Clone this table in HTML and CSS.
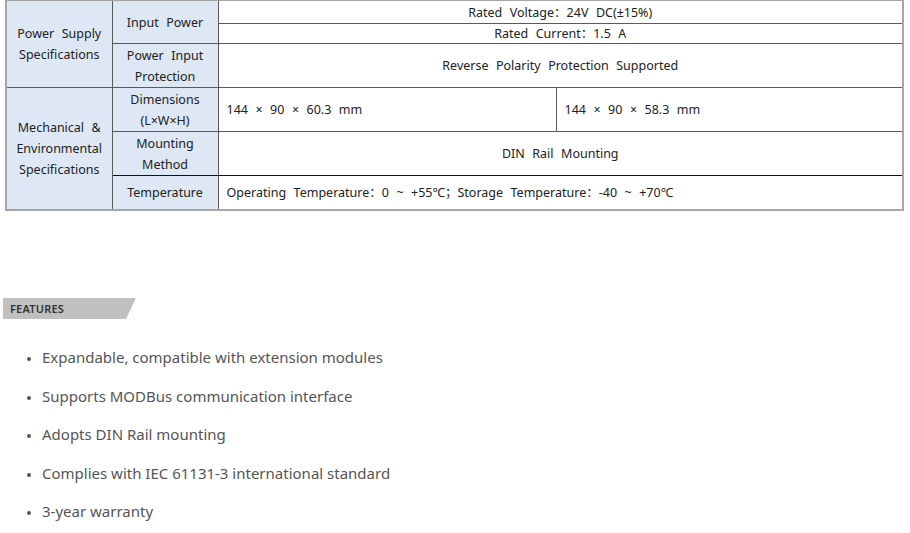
FILE: index.html
```html
<!DOCTYPE html>
<html>
<head>
<meta charset="utf-8">
<link rel="stylesheet" href="styles.css">
</head>
<body>
<div class="page">
  <table class="spec">
    <colgroup>
      <col class="c1"><col class="c2"><col class="c3"><col class="c4">
    </colgroup>
    <tr class="r1">
      <td class="lab" rowspan="3">Power&nbsp; Supply<br>Specifications</td>
      <td class="lab" rowspan="2">Input&nbsp; Power</td>
      <td class="val" colspan="2">Rated&nbsp; Voltage：24V&nbsp; DC(±15%)</td>
    </tr>
    <tr class="r2">
      <td class="val" colspan="2">Rated&nbsp; Current：1.5&nbsp; A</td>
    </tr>
    <tr class="r3">
      <td class="lab">Power&nbsp; Input<br>Protection</td>
      <td class="val" colspan="2">Reverse&nbsp; Polarity&nbsp; Protection&nbsp; Supported</td>
    </tr>
    <tr class="r4">
      <td class="lab" rowspan="3">Mechanical&nbsp; &amp;<br>Environmental<br>Specifications</td>
      <td class="lab">Dimensions<br>(L×W×H)</td>
      <td class="val left">144&nbsp; ×&nbsp; 90&nbsp; ×&nbsp; 60.3&nbsp; mm</td>
      <td class="val left">144&nbsp; ×&nbsp; 90&nbsp; ×&nbsp; 58.3&nbsp; mm</td>
    </tr>
    <tr class="r5">
      <td class="lab">Mounting<br>Method</td>
      <td class="val" colspan="2">DIN&nbsp; Rail&nbsp; Mounting</td>
    </tr>
    <tr class="r6">
      <td class="lab">Temperature</td>
      <td class="val left" colspan="2">Operating&nbsp; Temperature：0&nbsp; ~&nbsp; +55℃；Storage&nbsp; Temperature：-40&nbsp; ~&nbsp; +70℃</td>
    </tr>
  </table>

  <div class="badge">FEATURES</div>

  <ul class="features">
    <li>Expandable, compatible with extension modules</li>
    <li>Supports MODBus communication interface</li>
    <li>Adopts DIN Rail mounting</li>
    <li>Complies with IEC 61131-3 international standard</li>
    <li>3-year warranty</li>
  </ul>
</div>
</body>
</html>
```
FILE: styles.css
```css
html, body {
  margin: 0;
  padding: 0;
  background: #ffffff;
}
.page {
  padding: 0 0 0 5px;
}
.spec {
  border-collapse: collapse;
  width: 898px;
  margin-top: -1px;
  font-family: "Noto Sans", "Noto Sans CJK SC", sans-serif;
  font-size: 12.5px;
  word-spacing: 0.5px;
  color: #222;
  table-layout: fixed;
  border: 2px solid #a6a6a6;
}
.c1 { width: 106px; }
.c2 { width: 106px; }
.c3 { width: 338px; }
.c4 { width: 347px; }
.spec td {
  border: 1px solid #5a5a5a;
  padding: 0;
  line-height: 21px;
  text-align: center;
  vertical-align: middle;
  white-space: nowrap;
}
.spec td.lab {
  background: #dde8f4;
}
.spec td.left {
  text-align: left;
  padding-left: 8px;
}
.r1 td.val { height: 22px; }
.r2 td { height: 19px; line-height: 19px; }
.r3 td { height: 43px; }
.r4 td { height: 43px; }
.r5 td { height: 43px; }
.r5 td { border-bottom-color: #111; }
.r6 td { height: 33px; }
.spec tr:first-child td { border-top: 2px solid #a6a6a6; }
.spec td:last-child { border-right: 2px solid #a6a6a6; }
.r6 td { border-bottom: 2px solid #a6a6a6; }
.spec tr td.lab[rowspan="3"] { border-left: 2px solid #a6a6a6; }

.badge {
  margin: 87px 0 0 -2px;
  width: 133px;
  height: 21px;
  background: #c0c0c0;
  clip-path: polygon(0 0, 100% 0, calc(100% - 10px) 100%, 0 100%);
  font-family: "Noto Sans", sans-serif;
  font-size: 11px;
  font-weight: 600;
  color: #333;
  line-height: 21px;
  padding-left: 7px;
  box-sizing: border-box;
  letter-spacing: 0.2px;
}
.features {
  margin: 19px 0 0 0;
  padding-left: 37px;
  font-family: "Noto Sans", sans-serif;
  font-size: 15px;
  color: #555;
}
.features li {
  line-height: 38.5px;
}
.features li::marker {
  font-size: 12px;
}
```
